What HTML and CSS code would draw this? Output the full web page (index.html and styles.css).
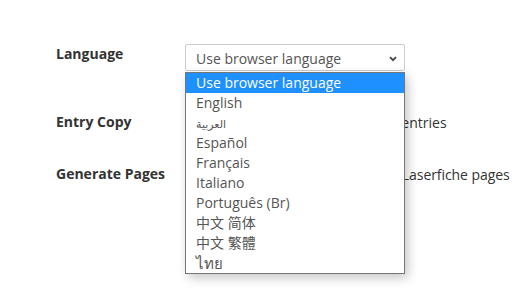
FILE: index.html
```html
<!DOCTYPE html>
<html>
<head>
<meta charset="utf-8">
<link rel="stylesheet" href="styles.css">
</head>
<body>
<div class="form">
  <div class="row row-lang">
    <div class="label">Language</div>
    <div class="control">
      <div class="select">
        <span>Use browser language</span>
        <svg class="chev" width="8" height="6" viewBox="0 0 8 6"><path d="M1 1.2 L4 4.2 L7 1.2" fill="none" stroke="#444" stroke-width="1.8"/></svg>
      </div>
      <ul class="dropdown">
        <li class="active">Use browser language</li>
        <li>English</li>
        <li><span class="ar">العربية</span></li>
        <li>Español</li>
        <li>Français</li>
        <li>Italiano</li>
        <li>Português (Br)</li>
        <li>中文 简体</li>
        <li>中文 繁體</li>
        <li><span class="th">ไทย</span></li>
      </ul>
    </div>
  </div>
  <div class="row row-copy">
    <div class="label">Entry Copy</div>
    <div class="control text"><span class="box"></span>Allow users to copy previous entries</div>
  </div>
  <div class="row row-pages">
    <div class="label">Generate Pages</div>
    <div class="control text"><span class="box"></span>Automatically generates new Laserfiche pages</div>
  </div>
</div>
</body>
</html>
```
FILE: styles.css
```css
html, body {
  margin: 0;
  padding: 0;
  background: #fff;
  min-height: 290px;
}
body {
  font-family: "Open Sans", "Noto Sans", "Noto Sans CJK SC", sans-serif;
  font-size: 14px;
  line-height: 20px;
  color: #333;
}
.form {
  padding: 44px 0 0 56px;
  min-height: 246px;
}
.row {
  display: grid;
  grid-template-columns: 129px 1fr;
}
.row-copy {
  margin-top: 41px;
}
.row-pages {
  margin-top: 31px;
}
.row-pages .text {
  letter-spacing: -0.07px;
}
.label {
  font-weight: 700;
  color: #333;
}
.control {
  position: relative;
}
.text {
  display: flex;
  align-items: center;
  padding-top: 1px;
  white-space: nowrap;
}
.box {
  width: 13px;
  height: 13px;
  border: 1px solid #999;
  border-radius: 2px;
  margin-right: 14px;
  box-sizing: border-box;
  flex: none;
}
.select {
  box-sizing: border-box;
  width: 220px;
  height: 27px;
  border: 1px solid #ccc;
  border-radius: 2px;
  padding: 4px 10px 0 10px;
  color: #555;
  display: flex;
  justify-content: space-between;
  align-items: flex-start;
}
.chev {
  margin-top: 7px;
  margin-right: -3px;
}
.dropdown {
  position: absolute;
  left: 0;
  top: 28px;
  width: 220px;
  box-sizing: border-box;
  margin: 0;
  padding: 0;
  list-style: none;
  background: #fff;
  border: 1px solid #767676;
  box-shadow: 3px 4px 10px rgba(0, 0, 0, 0.22);
  color: #555;
  z-index: 2;
}
.dropdown li {
  height: 20px;
  line-height: 20px;
  padding-left: 10px;
  white-space: nowrap;
}
.dropdown li.active {
  background: #1e90ff;
  color: #fff;
}
.ar {
  font-family: "DejaVu Sans", sans-serif;
  font-size: 11px;
}
.th {
  font-size: 15px;
}
```
